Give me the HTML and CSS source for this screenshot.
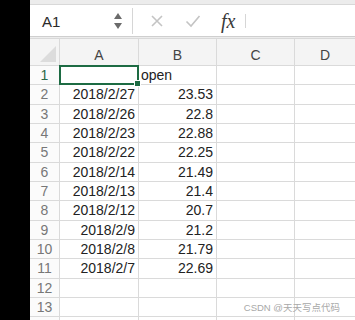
FILE: index.html
```html
<!DOCTYPE html>
<html>
<head>
<meta charset="utf-8">
<link rel="stylesheet" href="styles.css">
</head>
<body>
<div class="page">
  <div class="blackbar"></div>
  <div class="app">
    <div class="topstrip"></div>
    <div class="formulabar">
      <div class="namebox">
        <span class="ref">A1</span>
        <svg class="spin" width="10" height="20" viewBox="0 0 10 20">
          <path d="M1 8 L5 2 L9 8 Z" fill="#6b6b6b"/>
          <path d="M1 12 L5 18 L9 12 Z" fill="#6b6b6b"/>
        </svg>
      </div>
      <div class="fbtns">
        <svg class="xicon" width="14" height="14" viewBox="0 0 14 14">
          <path d="M2 2 L12 12 M12 2 L2 12" stroke="#c4c4c4" stroke-width="1.6" fill="none"/>
        </svg>
        <svg class="check" width="16" height="14" viewBox="0 0 16 14">
          <path d="M1.5 7.5 L6 12 L14.5 2" stroke="#c4c4c4" stroke-width="1.6" fill="none"/>
        </svg>
        <span class="fx">fx</span>
        <span class="fsep"></span>
      </div>
    </div>
    <div class="gap"></div>
    <div class="sheet">
      <div class="corner"><span class="tri"></span></div>
      <div class="ch">A</div>
      <div class="ch">B</div>
      <div class="ch">C</div>
      <div class="ch last">D</div>

      <div class="rh active">1</div><div class="c sel"><span class="handle"></span></div><div class="c l">open</div><div class="c"></div><div class="c last"></div>
      <div class="rh">2</div><div class="c r">2018/2/27</div><div class="c r">23.53</div><div class="c"></div><div class="c last"></div>
      <div class="rh">3</div><div class="c r">2018/2/26</div><div class="c r">22.8</div><div class="c"></div><div class="c last"></div>
      <div class="rh">4</div><div class="c r">2018/2/23</div><div class="c r">22.88</div><div class="c"></div><div class="c last"></div>
      <div class="rh">5</div><div class="c r">2018/2/22</div><div class="c r">22.25</div><div class="c"></div><div class="c last"></div>
      <div class="rh">6</div><div class="c r">2018/2/14</div><div class="c r">21.49</div><div class="c"></div><div class="c last"></div>
      <div class="rh">7</div><div class="c r">2018/2/13</div><div class="c r">21.4</div><div class="c"></div><div class="c last"></div>
      <div class="rh">8</div><div class="c r">2018/2/12</div><div class="c r">20.7</div><div class="c"></div><div class="c last"></div>
      <div class="rh">9</div><div class="c r">2018/2/9</div><div class="c r">21.2</div><div class="c"></div><div class="c last"></div>
      <div class="rh">10</div><div class="c r">2018/2/8</div><div class="c r">21.79</div><div class="c"></div><div class="c last"></div>
      <div class="rh">11</div><div class="c r">2018/2/7</div><div class="c r">22.69</div><div class="c"></div><div class="c last"></div>
      <div class="rh">12</div><div class="c"></div><div class="c"></div><div class="c"></div><div class="c last"></div>
      <div class="rh">13</div><div class="c"></div><div class="c"></div><div class="c"></div><div class="c last"></div>
      <div class="rh"></div><div class="c"></div><div class="c"></div><div class="c"></div><div class="c last"></div>
    </div>
    <div class="watermark">CSDN @天天写点代码</div>
  </div>
</div>
</body>
</html>
```
FILE: styles.css
```css
html, body {
  margin: 0;
  padding: 0;
  width: 355px;
  height: 320px;
  overflow: hidden;
  background: #000;
  font-family: "Liberation Sans", Arial, "Noto Sans CJK SC", sans-serif;
}
.page {
  display: flex;
  width: 355px;
  height: 320px;
}
.blackbar {
  width: 30px;
  flex: none;
  background: #000;
}
.app {
  flex: 1;
  position: relative;
  background: #fff;
  display: flex;
  flex-direction: column;
  overflow: hidden;
}
.app > div {
  flex: none;
}
.topstrip {
  height: 4px;
  background: #ececec;
  border-bottom: 1px solid #d8d8d8;
}
.formulabar {
  height: 31px;
  display: flex;
  align-items: center;
  background: #fff;
  border-bottom: 1px solid #cfcfcf;
}
.namebox {
  width: 103px;
  height: 26px;
  display: flex;
  align-items: center;
  justify-content: space-between;
  padding: 0 9px 0 12px;
  box-sizing: border-box;
  border-right: 1px solid #d6d6d6;
}
.ref {
  font-size: 15px;
  color: #2a2a2a;
  padding-top: 1px;
}
.spin {
  display: block;
}
.fbtns {
  display: flex;
  align-items: center;
  padding-left: 17px;
}
.xicon {
  display: block;
}
.check {
  display: block;
  margin-left: 21px;
}
.fx {
  margin-left: 20px;
  font-family: "Liberation Serif", "Times New Roman", serif;
  font-style: italic;
  font-size: 20px;
  color: #3a3a3a;
  line-height: 1;
}
.fsep {
  display: block;
  width: 1px;
  height: 14px;
  background: #d6d6d6;
  margin-left: 10px;
}
.gap {
  height: 1px;
  background: #ececec;
  border-bottom: 1px solid #d9d9d9;
}
.sheet {
  display: grid;
  grid-template-columns: 30px 79px 78px 78px 1fr;
  grid-template-rows: 27px repeat(14, 19.33px);
  font-size: 14px;
  color: #222;
}
.sheet > div {
  box-sizing: border-box;
  border-right: 1px solid #dadada;
  border-bottom: 1px solid #dadada;
  display: flex;
  align-items: center;
  white-space: nowrap;
}
.sheet > div.last {
  border-right: none;
}
.corner {
  background: #f4f4f4;
  position: relative;
}
.tri {
  position: absolute;
  right: 3px;
  bottom: 3px;
  width: 0;
  height: 0;
  border-left: 16px solid transparent;
  border-bottom: 16px solid #dcdcdc;
}
.ch {
  background: #f4f4f4;
  justify-content: center;
  color: #444;
  font-size: 14px;
  padding-top: 5px;
}
.rh {
  background: #fbfbfb;
  justify-content: center;
  color: #777;
  font-size: 14px;
}
.rh.active {
  color: #2d6a48;
}
.c.r {
  justify-content: flex-end;
  padding-right: 3px;
}
.c.l {
  padding-left: 2px;
}
.sheet > div.sel {
  position: relative;
  border: 2px solid #1d6b43;
  margin: -1px 0 0 -1px;
}
.handle {
  position: absolute;
  right: -4px;
  bottom: -4px;
  width: 5px;
  height: 5px;
  background: #1d6b43;
  border: 1px solid #fff;
}
.watermark {
  position: absolute;
  right: 15px;
  bottom: 6px;
  font-size: 9.5px;
  color: #a8a8a8;
}
```
